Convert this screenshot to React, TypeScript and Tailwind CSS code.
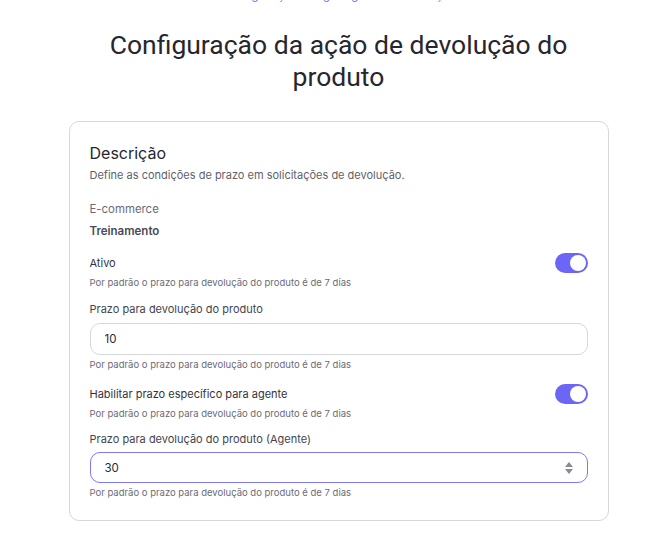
import { useState } from "react";

function Toggle({ on, onChange }: { on: boolean; onChange: (v: boolean) => void }) {
  return (
    <button
      type="button"
      role="switch"
      aria-checked={on}
      onClick={() => onChange(!on)}
      className={`relative h-[20px] w-[33px] shrink-0 rounded-full transition-colors ${on ? "bg-[#6b66f5]" : "bg-gray-300"}`}
    >
      <span
        className={`absolute top-[2px] h-[16px] w-[16px] rounded-full bg-white transition-all ${on ? "left-[15px]" : "left-[2px]"}`}
      />
    </button>
  );
}

function Helper() {
  return <p className="text-[9.5px] leading-[14px] text-[#6b6b76]">Por padrão o prazo para devolução do produto é de 7 dias</p>;
}

export default function App() {
  const [ativo, setAtivo] = useState(true);
  const [agente, setAgente] = useState(true);
  const [prazo, setPrazo] = useState("10");
  const [prazoAgente, setPrazoAgente] = useState("30");

  return (
    <div className="min-h-[538px] bg-white pl-[7px] font-['Inter',sans-serif] text-[#2b2b33]">
      {/* breadcrumb, mostly scrolled out of view */}
      <div className="-mt-[13px] h-[16px] overflow-hidden text-center text-[12px] leading-[15px] text-[#7b78f0]">
        Configuração · Regras gerais · Devolução
      </div>

      <h1 className="mx-auto mt-[26px] max-w-[480px] text-center font-['Roboto',sans-serif] text-[26.5px] leading-[32px] text-[#26262e]">
        Configuração da ação de devolução do produto
      </h1>

      <div className="mx-auto mt-[28px] w-[540px] rounded-[10px] border border-[#d6d6dc] px-[20px] pb-[20px] pt-[21px]">
        <h2 className="text-[16px] leading-[20px] text-[#26262e]">Descrição</h2>
        <p className="mt-[4px] text-[11px] leading-[16px] text-[#5f5f6a]">
          Define as condições de prazo em solicitações de devolução.
        </p>

        <p className="mt-[18px] text-[11.4px] leading-[16px] text-[#6b6b76]">E-commerce</p>
        <p className="mt-[6px] text-[11.5px] font-semibold leading-[16px] text-[#4a4a55]">Treinamento</p>

        <div className="mt-[14px] flex items-center justify-between">
          <span className="text-[11px] leading-[16px] text-[#33333c]">Ativo</span>
          <Toggle on={ativo} onChange={setAtivo} />
        </div>
        <div className="mt-[3px]">
          <Helper />
        </div>

        <label className="mt-[11px] block text-[11px] leading-[16px] text-[#44444e]">Prazo para devolução do produto</label>
        <input
          value={prazo}
          onChange={(e) => setPrazo(e.target.value)}
          className="mt-[6px] h-[32px] w-full rounded-[10px] border border-[#d6d6dc] px-[14px] text-[11.5px] text-[#2b2b33] outline-none"
        />
        <div className="mt-[3px]">
          <Helper />
        </div>

        <div className="mt-[12px] flex items-center justify-between">
          <span className="text-[11px] leading-[16px] text-[#33333c]">Habilitar prazo específico para agente</span>
          <Toggle on={agente} onChange={setAgente} />
        </div>
        <div className="mt-[3px]">
          <Helper />
        </div>

        <label className="mt-[10px] block text-[11px] leading-[16px] text-[#44444e]">
          Prazo para devolução do produto (Agente)
        </label>
        <div className="relative mt-[5px]">
          <input
            value={prazoAgente}
            onChange={(e) => setPrazoAgente(e.target.value)}
            className="h-[31px] w-full rounded-[10px] border border-[#7d79f2] px-[14px] text-[11.5px] text-[#2b2b33] outline-none"
          />
          <div className="pointer-events-none absolute right-[15px] top-1/2 flex -translate-y-1/2 flex-col items-center gap-[2px]">
            <svg width="8" height="5" viewBox="0 0 8 5"><path d="M4 0L8 5H0z" fill="#8a8a94" /></svg>
            <svg width="8" height="5" viewBox="0 0 8 5"><path d="M0 0h8L4 5z" fill="#8a8a94" /></svg>
          </div>
        </div>
        <div className="mt-[3px]">
          <Helper />
        </div>
      </div>
    </div>
  );
}
